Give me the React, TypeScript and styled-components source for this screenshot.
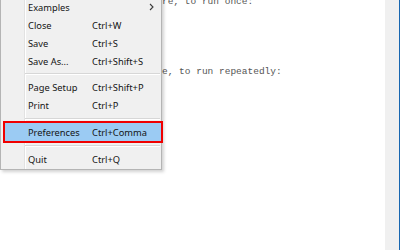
import React from "react";
import styled, { createGlobalStyle } from "styled-components";

const GlobalStyle = createGlobalStyle`
  html, body {
    margin: 0;
    padding: 0;
    background: #ffffff;
  }
  body {
    width: 400px;
    height: 250px;
    overflow: hidden;
  }
`;

const Window = styled.div`
  width: 400px;
  height: 250px;
  display: flex;
  align-items: flex-start;
  overflow: hidden;
  background: #ffffff;
`;

/* the part of the sketch that is not covered by the open menu */
const EditorPane = styled.div`
  flex: 1;
  align-self: stretch;
  overflow: hidden;
`;

const Code = styled.pre`
  margin: -5.5px 0 0;
  padding: 0;
  font-family: "Liberation Mono", monospace;
  font-size: 9.5px;
  line-height: 14px;
  color: #555555;
  white-space: pre;
`;

const ScrollTrack = styled.div`
  align-self: stretch;
  width: 14px;
  background: #f0f0f0;
`;

const WindowEdge = styled.div`
  align-self: stretch;
  width: 1px;
  background: #1866b0;
`;

const Menu = styled.div`
  position: relative;
  z-index: 1;
  flex: none;
  margin-top: -3px;
  width: 162px;
  box-sizing: border-box;
  padding-bottom: 1px;
  border: 1px solid #b4b4b4;
  background: linear-gradient(
    to right,
    #f0f0f0 0,
    #f0f0f0 23px,
    #e2e2e2 23px,
    #e2e2e2 24px,
    #ffffff 24px,
    #ffffff 25px,
    #f0f0f0 25px
  );
  box-shadow: 2px 2px 3px rgba(0, 0, 0, 0.18);
  font-family: "Noto Sans", "Open Sans", sans-serif;
  font-size: 9.3px;
  color: #141414;
`;

const Item = styled.div<{ $active?: boolean }>`
  display: grid;
  grid-template-columns: 64px 1fr 12px;
  align-items: center;
  height: 18px;
  padding-left: ${({ $active }) => ($active ? "23px" : "27px")};
  margin-left: ${({ $active }) => ($active ? "4px" : "0")};
  background: ${({ $active }) => ($active ? "#9bcbf3" : "transparent")};
  outline: ${({ $active }) => ($active ? "2px solid #f00000" : "none")};
  white-space: nowrap;
`;

const Shortcut = styled.span`
  color: #141414;
`;

const Separator = styled.div<{ $gap: number }>`
  display: flex;
  align-items: center;
  height: ${({ $gap }) => $gap}px;
  padding: 0 1px 0 24px;

  &::after {
    content: "";
    flex: 1;
    height: 1px;
    border-bottom: 1px solid #ffffff;
    background: #d7d7d7;
  }
`;

const Chevron = () => (
  <svg width="5" height="8" viewBox="0 0 5 8">
    <polyline points="1,1 4,4 1,7" fill="none" stroke="#3c3c3c" strokeWidth="1.1" />
  </svg>
);

// what is left in view of the sketch once the File menu covers its left side
const visibleCode = `re, to run once:




e, to run repeatedly:
`;

const App: React.FC = () => {
  return (
    <>
      <GlobalStyle />
      <Window>
        <Menu>
          <Item>
            <span>Examples</span>
            <span />
            <Chevron />
          </Item>
          <Item>
            <span>Close</span>
            <Shortcut>Ctrl+W</Shortcut>
          </Item>
          <Item>
            <span>Save</span>
            <Shortcut>Ctrl+S</Shortcut>
          </Item>
          <Item>
            <span>Save As...</span>
            <Shortcut>Ctrl+Shift+S</Shortcut>
          </Item>
          <Separator $gap={8} />
          <Item>
            <span>Page Setup</span>
            <Shortcut>Ctrl+Shift+P</Shortcut>
          </Item>
          <Item>
            <span>Print</span>
            <Shortcut>Ctrl+P</Shortcut>
          </Item>
          <Separator $gap={9} />
          <Item $active>
            <span>Preferences</span>
            <Shortcut>Ctrl+Comma</Shortcut>
          </Item>
          <Separator $gap={9} />
          <Item>
            <span>Quit</span>
            <Shortcut>Ctrl+Q</Shortcut>
          </Item>
        </Menu>
        <EditorPane>
          <Code>{visibleCode}</Code>
        </EditorPane>
        <ScrollTrack />
        <WindowEdge />
      </Window>
    </>
  );
};

export default App;
